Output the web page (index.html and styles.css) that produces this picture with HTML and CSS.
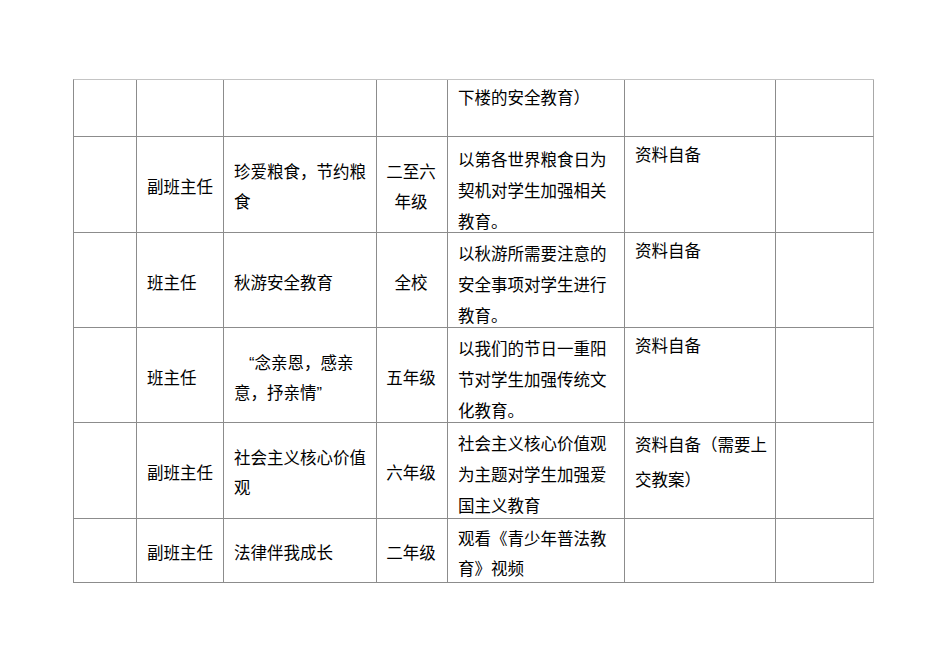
FILE: index.html
```html
<!DOCTYPE html>
<html lang="zh-CN">
<head>
<meta charset="utf-8">
<title>班队活动安排</title>
<link rel="stylesheet" href="styles.css">
</head>
<body>
<table class="plan">
  <colgroup>
    <col class="c1"><col class="c2"><col class="c3"><col class="c4"><col class="c5"><col class="c6"><col class="c7">
  </colgroup>
  <tbody>
    <tr class="r1">
      <td></td><td></td><td></td><td></td>
      <td class="top first"><div class="txt">下楼的安全教育）</div></td>
      <td></td><td></td>
    </tr>
    <tr class="r2">
      <td></td>
      <td class="mid">副班主任</td>
      <td class="mid">珍爱粮食，节约粮<br>食</td>
      <td class="mid center">二至六<br>年级</td>
      <td class="top"><div class="txt">以第各世界粮食日为<br>契机对学生加强相关<br>教育。</div></td>
      <td class="note"><div class="txt">资料自备</div></td>
      <td></td>
    </tr>
    <tr class="r3">
      <td></td>
      <td class="mid">班主任</td>
      <td class="mid">秋游安全教育</td>
      <td class="mid center">全校</td>
      <td class="top"><div class="txt">以秋游所需要注意的<br>安全事项对学生进行<br>教育。</div></td>
      <td class="note"><div class="txt">资料自备</div></td>
      <td></td>
    </tr>
    <tr class="r4">
      <td></td>
      <td class="mid">班主任</td>
      <td class="mid"><span class="indent">“念亲恩，感亲</span><br>意，抒亲情”</td>
      <td class="mid center">五年级</td>
      <td class="top"><div class="txt">以我们的节日一重阳<br>节对学生加强传统文<br>化教育。</div></td>
      <td class="note"><div class="txt">资料自备</div></td>
      <td></td>
    </tr>
    <tr class="r5">
      <td></td>
      <td class="mid">副班主任</td>
      <td class="mid">社会主义核心价值<br>观</td>
      <td class="mid center">六年级</td>
      <td class="top"><div class="txt">社会主义核心价值观<br>为主题对学生加强爱<br>国主义教育</div></td>
      <td class="note late"><div class="txt">资料自备（需要上<br>交教案）</div></td>
      <td></td>
    </tr>
    <tr class="r6">
      <td></td>
      <td class="mid">副班主任</td>
      <td class="mid">法律伴我成长</td>
      <td class="mid center">二年级</td>
      <td class="top short"><div class="txt">观看《青少年普法教<br>育》视频</div></td>
      <td class="note"></td>
      <td></td>
    </tr>
  </tbody>
</table>
</body>
</html>
```
FILE: styles.css
```css
html, body {
  margin: 0;
  padding: 0;
  background: #ffffff;
}

body {
  padding: 79px 0 0 73px;
  font-family: "Liberation Sans", "Noto Sans CJK SC", sans-serif;
  font-size: 16.5px;
  color: #000000;
}

.plan {
  border-collapse: separate;
  border-spacing: 0;
  table-layout: fixed;
  width: 801px;
  border-left: 1px solid #8c8c8c;
  border-top: 1px solid #c4c4c4;
}

.c1 { width: 63px; }
.c2 { width: 87px; }
.c3 { width: 153px; }
.c4 { width: 71px; }
.c5 { width: 177px; }
.c6 { width: 151px; }
.c7 { width: 98px; }

.plan td {
  box-sizing: border-box;
  border-right: 1px solid #8c8c8c;
  border-bottom: 1px solid #8c8c8c;
  padding: 0 0 0 10px;
  line-height: 30px;
  white-space: nowrap;
  vertical-align: top;
  overflow: visible;
}

.plan tr td:last-child {
  border-right-color: #a8a8a8;
}

.r1 td { height: 57px; }
.r2 td { height: 96px; }
.r3 td { height: 95px; }
.r4 td { height: 95px; }
.r5 td { height: 96px; }
.r6 td { height: 64px; }

.txt {
  margin-bottom: -14px;
}

.plan td.mid {
  vertical-align: middle;
  padding-top: 5px;
}

.plan td.center {
  text-align: center;
  padding-left: 0;
  padding-right: 2px;
}

.plan td.top {
  padding-top: 6px;
  line-height: 31px;
}

.plan .r2 td.top {
  padding-top: 8px;
}

.plan td.top.first {
  padding-top: 3px;
}

.plan td.top.short {
  padding-top: 5px;
  line-height: 30px;
}

.plan td.note {
  padding-top: 1px;
  line-height: 35px;
}

.plan td.note.late {
  padding-top: 5px;
}

.indent {
  padding-left: 15px;
}
```
